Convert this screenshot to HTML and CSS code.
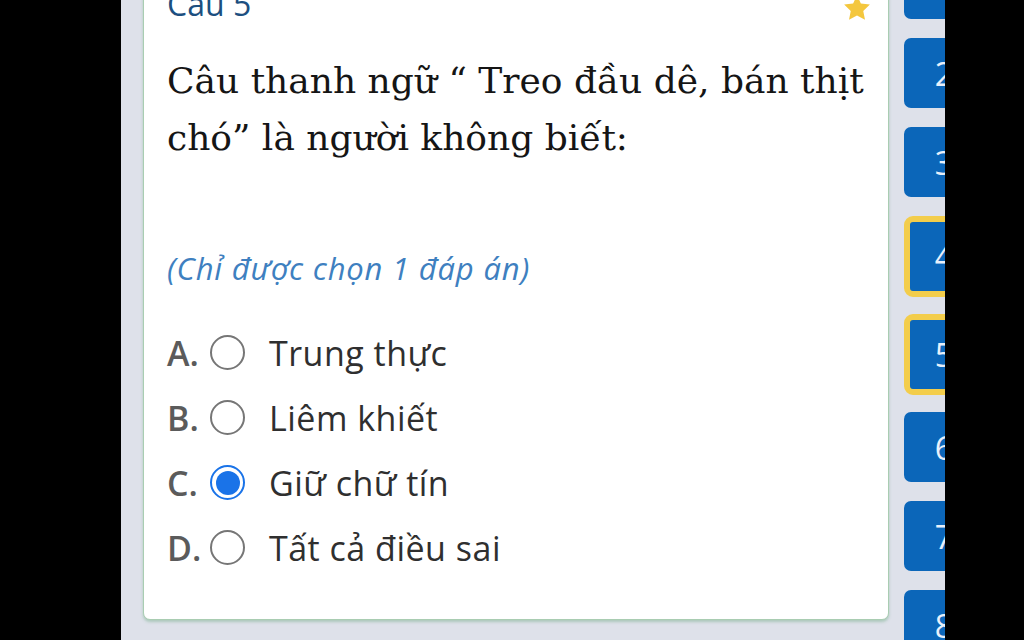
FILE: index.html
```html
<!DOCTYPE html>
<html lang="vi">
<head>
<meta charset="utf-8">
<link rel="stylesheet" href="styles.css">
</head>
<body>
<div class="screen">
  <div class="side-black"></div>
  <div class="main">
    <div class="card">
      <div class="card-head">
        <span class="q-title">Câu 5</span>
        <svg class="star" viewBox="0 0 24 24" width="30" height="30"><path d="M12 1.8l3.1 6.6 7.2.9-5.3 5 1.4 7.1L12 17.9l-6.4 3.5 1.4-7.1-5.3-5 7.2-.9z" fill="#f4c73e"/></svg>
      </div>
      <div class="q-text">Câu thanh ngữ “ Treo đầu dê, bán thịt chó” là người không biết:</div>
      <div class="hint">(Chỉ được chọn 1 đáp án)</div>
      <ul class="options">
        <li class="opt"><span class="letter">A.</span><span class="radio"></span><span class="label">Trung thực</span></li>
        <li class="opt"><span class="letter">B.</span><span class="radio"></span><span class="label">Liêm khiết</span></li>
        <li class="opt"><span class="letter">C.</span><span class="radio checked"></span><span class="label">Giữ chữ tín</span></li>
        <li class="opt"><span class="letter">D.</span><span class="radio"></span><span class="label">Tất cả điều sai</span></li>
      </ul>
    </div>
    <div class="nav">
      <div class="nbtn">1</div>
      <div class="nbtn">2</div>
      <div class="nbtn">3</div>
      <div class="nbtn flag">4</div>
      <div class="nbtn flag">5</div>
      <div class="nbtn">6</div>
      <div class="nbtn">7</div>
      <div class="nbtn">8</div>
    </div>
  </div>
  <div class="side-black right"></div>
</div>
</body>
</html>
```

FILE: styles.css
```css
* { box-sizing: border-box; }
html, body { margin: 0; padding: 0; }
body {
  width: 1024px;
  height: 640px;
  overflow: hidden;
  background: #000;
  font-family: "Open Sans", "Noto Sans", sans-serif;
}
.screen {
  display: flex;
  width: 1024px;
  height: 640px;
}
.side-black {
  width: 121px;
  flex: none;
  background: #000;
}
.side-black.right {
  width: 79px;
}
.main {
  flex: none;
  width: 824px;
  height: 640px;
  overflow: hidden;
  background: #dee1ea;
  display: flex;
  align-items: flex-start;
  padding-left: 22px;
  gap: 15px;
}
.card {
  flex: none;
  width: 746px;
  height: 660px;
  margin-top: -40px;
  background: #fff;
  border: 1.5px solid #a9cdb2;
  border-radius: 7px;
  box-shadow: 0 2px 3px rgba(110, 170, 130, 0.45);
  padding: 0 0 0 23px;
}
.card-head {
  display: flex;
  justify-content: space-between;
  align-items: flex-start;
  padding-right: 16px;
}
.q-title {
  font-size: 32px;
  line-height: 40px;
  color: #1c4f80;
  margin-top: 23px;
}
.star {
  margin-top: 32px;
}
.q-text {
  font-family: "DejaVu Serif", "Liberation Serif", serif;
  font-size: 36px;
  line-height: 57px;
  color: #151515;
  width: 715px;
  margin-top: 28px;
}
.hint {
  margin-top: 84px;
  font-style: italic;
  font-size: 31px;
  letter-spacing: 0.8px;
  line-height: 36px;
  color: #3e80c0;
}
.options {
  list-style: none;
  margin: 34px 0 0 0;
  padding: 0;
}
.opt {
  display: flex;
  align-items: center;
  height: 65px;
}
.letter {
  font-size: 34px;
  font-weight: 600;
  color: #5b5b5b;
  width: 43px;
  flex: none;
}
.radio {
  width: 35px;
  height: 35px;
  border: 2px solid #767676;
  border-radius: 50%;
  flex: none;
  margin-right: 24px;
  position: relative;
}
.radio.checked {
  border: 2.5px solid #1a73e8;
}
.radio.checked::after {
  content: "";
  position: absolute;
  left: 3.5px;
  top: 3.5px;
  right: 3.5px;
  bottom: 3.5px;
  border-radius: 50%;
  background: #1a73e8;
}
.label {
  font-size: 34px;
  letter-spacing: 0.5px;
  color: #2f2f2f;
}
.nav {
  flex: none;
  width: 80px;
  margin-top: -51px;
  display: flex;
  flex-direction: column;
  gap: 19px;
}
.nbtn {
  height: 70px;
  border-radius: 7px;
  background: #0b66b9;
  color: #e8f0fb;
  font-size: 32px;
  display: flex;
  align-items: center;
  justify-content: center;
}
.nbtn.flag {
  height: 81px;
  border: 6px solid #f3cd4b;
  border-radius: 9px;
  margin-bottom: -2px;
}
```
